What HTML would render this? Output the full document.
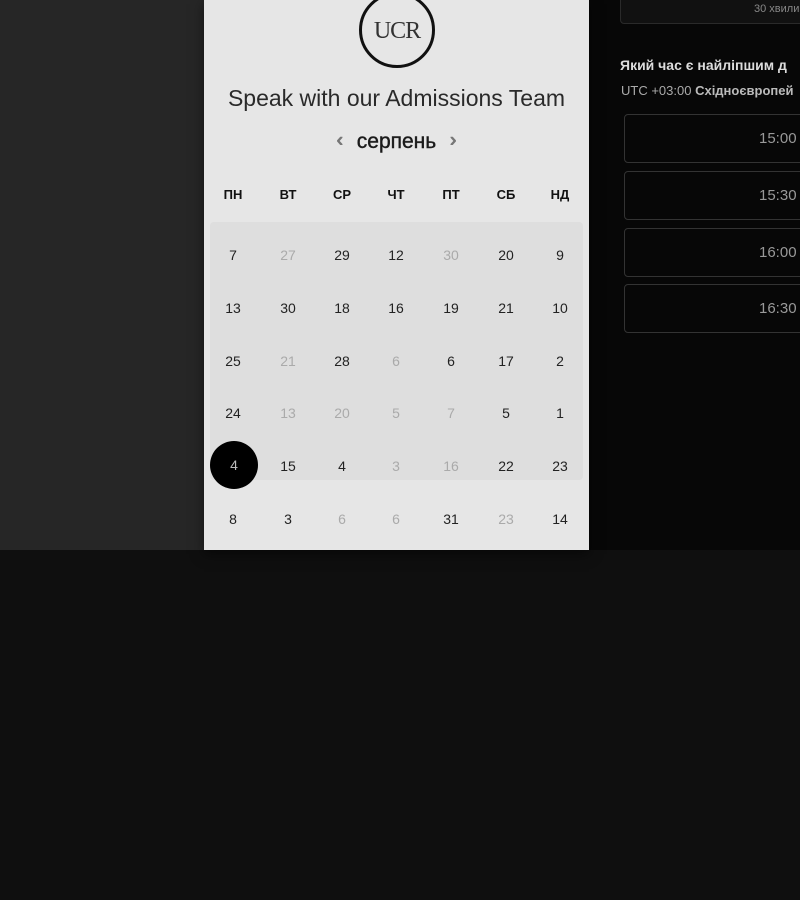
<!DOCTYPE html>
<html><head><meta charset="utf-8"><style>
*{margin:0;padding:0;box-sizing:border-box}
body{width:800px;height:900px;background:#0f0f0f;position:relative;overflow:hidden;font-family:"Liberation Sans",sans-serif}
.left{position:absolute;left:0;top:0;width:204px;height:550px;background:#262626}
.right{position:absolute;left:589px;top:0;width:211px;height:550px;background:#070707}
.panel{position:absolute;left:204px;top:0;width:385px;height:550px;background:#e6e6e6;box-shadow:0 4px 12px rgba(0,0,0,.5)}
.logo{position:absolute;left:359px;top:-8px;width:76px;height:76px;border:3px solid #111;border-radius:50%;text-align:center;font-family:"Liberation Serif",serif;font-size:24px;color:#333;line-height:72px;letter-spacing:-1px}
.title{position:absolute;left:204px;width:385px;top:85px;text-align:center;font-size:23px;color:#2a2a2a}
.month{position:absolute;left:204px;width:385px;top:130px;text-align:center;font-size:21px;color:#1a1a1a;-webkit-text-stroke:0.4px #1a1a1a}
.month span{color:#777;font-size:18px;margin:0 14px;vertical-align:2px;-webkit-text-stroke:1px #777}
.grid{position:absolute;left:210px;top:222px;width:373px;height:258px;background:#dedede;border-radius:4px}
.c{position:absolute;width:40px;margin-left:-20px;text-align:center;font-size:14px;color:#222;line-height:16px}
.h{font-weight:bold;font-size:13px;color:#111}
.g{color:#aaa}
.sel{position:absolute;left:210px;top:441px;width:48px;height:48px;border-radius:50%;background:#000;color:#bbb;text-align:center;line-height:48px;font-size:14px}
.card{position:absolute;left:620px;top:-10px;width:200px;height:34px;border:1px solid #2a2a2a;border-radius:4px;background:#111;color:#888;font-size:11px;padding-top:12px;padding-left:133px}
.q{position:absolute;left:620px;top:57px;color:#ddd;font-weight:bold;font-size:14px;white-space:nowrap}
.tz{position:absolute;left:621px;top:83px;color:#aaa;font-size:13px;white-space:nowrap}
.tz b{color:#bbb}
.slot{position:absolute;left:624px;width:200px;height:49px;border:1px solid #333;border-radius:4px;color:#999;font-size:15px;line-height:47px;padding-left:134px}
</style></head><body>
<div class="left"></div><div class="right"></div>
<div class="panel"></div>
<div class="logo">UCR</div>
<div class="title">Speak with our Admissions Team</div>
<div class="month"><span>‹</span>серпень<span>›</span></div>
<div class="grid"></div>
<div id="cal"></div>
<div class="sel">4</div>
<div class="card">30 хвили</div>
<div class="q">Який час є найліпшим д</div>
<div class="tz">UTC +03:00 <b>Східноєвропей</b></div>
<div class="slot" style="top:114px">15:00</div>
<div class="slot" style="top:171px">15:30</div>
<div class="slot" style="top:228px">16:00</div>
<div class="slot" style="top:284px">16:30</div>
<script>
var xs=[233,288,342,396,451,506,560],ys=[247,300,353,405,458,511];
var h=["ПН","ВТ","СР","ЧТ","ПТ","СБ","НД"];
var d=[["7","27g","29","12","30g","20","9"],["13","30","18","16","19","21","10"],["25","21g","28","6g","6","17","2"],["24","13g","20g","5g","7g","5","1"],["","15","4","3g","16g","22","23"],["8","3","6g","6g","31","23g","14"]];
var o="";
h.forEach(function(t,i){o+='<div class="c h" style="left:'+xs[i]+'px;top:187px">'+t+'</div>'});
d.forEach(function(r,j){r.forEach(function(t,i){if(!t)return;var g=t.slice(-1)=="g";o+='<div class="c'+(g?' g':'')+'" style="left:'+xs[i]+'px;top:'+ys[j]+'px">'+(g?t.slice(0,-1):t)+'</div>'})});
document.getElementById("cal").innerHTML=o;
</script>
</body></html>
